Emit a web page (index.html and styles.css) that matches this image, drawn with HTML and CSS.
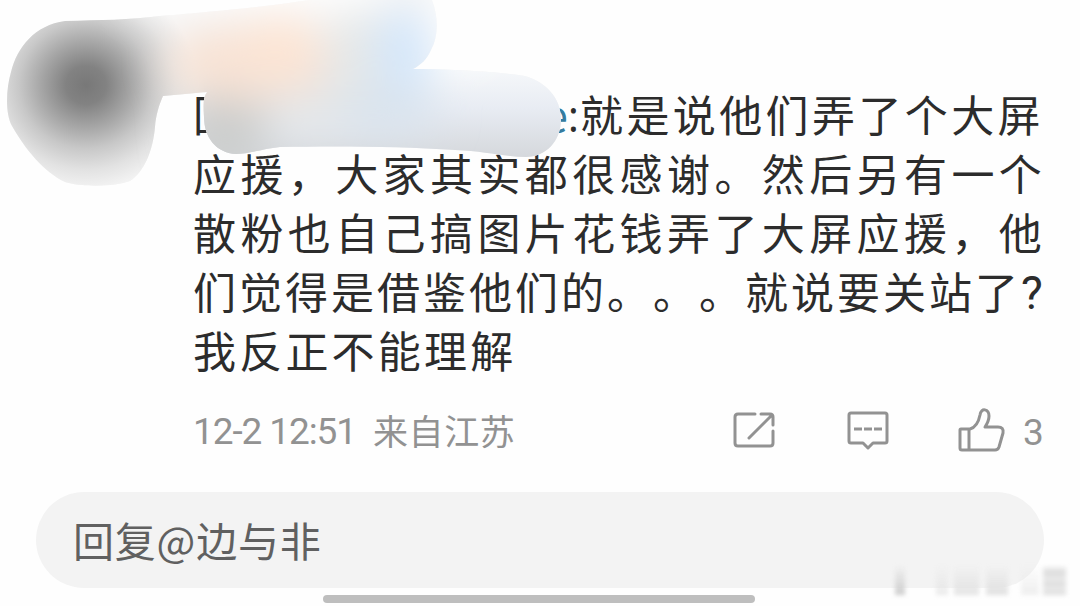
FILE: index.html
```html
<!DOCTYPE html>
<html lang="zh-CN">
<head>
<meta charset="utf-8">
<title>评论回复</title>
<link rel="stylesheet" href="styles.css">
</head>
<body>
<main class="screen">
  <article class="comment">
    <div class="line first"><span>回</span><span class="rest"><span class="mention">e</span><span class="colon">:</span>就是说他们弄了个大屏</span></div>
    <div class="line wide">应援，大家其实都很感谢。然后另有一个</div>
    <div class="line wide">散粉也自己搞图片花钱弄了大屏应援，他</div>
    <div class="line tight">们觉得是借鉴他们的。。。就说要关站了<span class="question">?</span></div>
    <div class="line">我反正不能理解</div>
    <footer class="meta">
      <span class="date">12-2 12:51</span><span class="place">来自江苏</span>
      <div class="actions">
        <svg class="share" width="42" height="38" viewBox="0 0 42 38"><path d="M22 3H5Q2 3 2 6V32Q2 35 5 35H37Q40 35 40 32V20M28 3H37Q40 3 40 6V14M16 27L39 4"/></svg>
        <svg class="reply" width="42" height="40" viewBox="0 0 42 40"><path d="M4 3H38Q40 3 40 5V31Q40 33 38 33H26L21 38L16 33H4Q2 33 2 31V5Q2 3 4 3Z"/><path class="dash" d="M7 19H15M17 19H25M27 19H35"/></svg>
        <svg class="like" width="48" height="46" viewBox="0 0 48 46"><path d="M2 23Q2 22 3 22H12C19 20 21 13 22 8C23 0 31 2 31 9C31 13 29 17 27 20H40Q46 20 45 26L41 40Q40 43 37 43H4Q2 43 2 41ZM11 22V43"/></svg>
        <span class="count">3</span>
      </div>
    </footer>
  </article>
  <div class="input">回复@边与非</div>
  <div class="home"></div>
  <svg class="smudge" width="580" height="200" viewBox="0 0 580 200">
    <defs>
      <clipPath id="shape"><path d="M65 21C100 20 130 20 160 16C220 11 270 6 310 0H432C439 18 438 38 431 50C427 59 421 65 413 69C450 69 490 71 525 76C546 82 561 98 561 119C561 142 545 157 526 157C505 157 485 151 455 150C400 146 330 146 280 147C262 149 248 154 236 154C216 153 204 137 204 117C203 105 203 98 207 92L163 96C159 105 156 115 155 127C153 151 144 172 130 181C115 187 80 187 65 182C44 172 25 149 12 126C5 113 6 89 11 72C17 47 35 25 65 21Z"/></clipPath>
      <radialGradient id="avatar">
        <stop offset="0" stop-color="#787878"/><stop offset=".18" stop-color="#828282"/><stop offset=".4" stop-color="#a6a6a6"/><stop offset=".6" stop-color="#c8c8c8"/><stop offset=".8" stop-color="#e2e2e2"/><stop offset="1" stop-color="#f5f5f5"/>
      </radialGradient>
      <linearGradient id="pill" gradientUnits="userSpaceOnUse" x1="0" x2="0" y1="68" y2="157"><stop offset="0" stop-color="#f6f8fa"/><stop offset=".45" stop-color="#e8ecf3"/><stop offset="1" stop-color="#d5d8dc"/></linearGradient>
      <filter id="soft" x="-60%" y="-60%" width="220%" height="220%"><feGaussianBlur stdDeviation="20"/></filter>
    </defs>
    <g clip-path="url(#shape)">
      <rect width="580" height="200" fill="#f5f5f5"/>
      <ellipse cx="86" cy="85" rx="112" ry="106" fill="url(#avatar)"/>
      <rect x="204" y="68" width="376" height="100" fill="url(#pill)"/>
      <g filter="url(#soft)">
        <rect x="240" y="55" width="170" height="80" fill="#e3e6e8"/>
        <ellipse cx="225" cy="130" rx="44" ry="46" fill="#cccecd"/>
        <ellipse cx="250" cy="62" rx="84" ry="38" fill="#f8e3d5"/>
        <ellipse cx="282" cy="42" rx="38" ry="26" fill="#fde5d4"/>
        <ellipse cx="360" cy="55" rx="36" ry="44" fill="#e5e8e8"/>
        <ellipse cx="404" cy="52" rx="28" ry="46" fill="#d4e7fb"/>
        <ellipse cx="388" cy="112" rx="50" ry="25" fill="#d9e3ed"/>
        <rect x="130" y="-50" width="250" height="53" fill="#fff"/>
        <rect x="438" y="-60" width="50" height="115" fill="#fff"/>
      </g>
    </g>
  </svg>
  <div class="watermark"><i class="w1"></i><i class="w2"></i><i class="w3"></i><i class="w4"></i><i class="w5"></i><i class="w6"></i></div>
</main>
</body>
</html>
```
FILE: styles.css
```css
* { box-sizing: border-box; }
body { margin: 0; background: #fff; font-family: "Noto Sans CJK SC", sans-serif; }
.screen { position: relative; width: 1080px; height: 606px; overflow: hidden; padding-top: 84px; background: #fefefe; }
.comment { width: 850px; margin-left: 193px; color: #2c2c2c; }
.line { height: 59px; font-size: 43px; line-height: 59px; letter-spacing: 3.2px; white-space: nowrap; text-spacing-trim: space-all; }
.wide { letter-spacing: 4.4px; }
.tight { letter-spacing: 3px; }
.first { display: flex; justify-content: space-between; letter-spacing: 3.4px; }
.rest { margin-right: -1px; }
.mention { color: #357b9f; letter-spacing: 0; }
.colon { font-family: "Open Sans", sans-serif; letter-spacing: 1px; }
.question { font-family: Roboto, sans-serif; font-size: 46px; }
.meta { display: flex; align-items: center; height: 48px; margin-top: 27px; color: #929292; line-height: 48px; white-space: nowrap; }
.date { width: 180px; padding-top: 3px; font-family: Roboto, sans-serif; font-size: 37px; letter-spacing: -1.1px; }
.place { font-size: 35px; letter-spacing: .6px; }
.actions { display: flex; align-items: center; margin: 0 1px 0 auto; }
.actions svg { fill: none; stroke: #929292; stroke-width: 3; stroke-linecap: round; stroke-linejoin: round; }
.reply { margin-left: 72px; }
.like { margin-left: 69px; }
.actions .dash { stroke-linecap: butt; }
.count { width: 19px; margin-left: 17px; padding-top: 5px; font-family: Roboto, sans-serif; font-size: 37px; }
.input { width: 1008px; height: 96px; margin: 38px 0 0 36px; padding-left: 37px; border-radius: 48px; background: #f3f3f3; color: #606060; font-size: 41px; line-height: 95px; letter-spacing: .8px; }
.home { width: 432px; height: 8px; margin: 7px 0 0 323px; border-radius: 4px; background: #bebebe; }
.smudge { position: absolute; left: 0; top: 0; }
.watermark { position: absolute; left: 884px; top: 564px; display: flex; align-items: flex-end; width: 184px; height: 31px; filter: blur(2px); }
.watermark i { display: block; height: 30px; background: linear-gradient(transparent, #e0e0e0); }
.w1 { width: 10px; margin-left: 11px; }
.watermark .w1 { background: linear-gradient(transparent, #ccc); }
.w2 { width: 12px; margin-left: 31px; opacity: .65; }
.w3 { width: 25px; margin-left: 6px; opacity: .9; }
.w4 { width: 22px; margin-left: 7px; }
.w5 { width: 18px; margin-left: 13px; opacity: .5; }
.watermark .w6 { width: 23px; height: 28px; margin-left: 4px; background: linear-gradient(#eee, #ddd 20%, #eaeaea 45%, #ddd 60%, #eaeaea 75%, #ddd); }
```
